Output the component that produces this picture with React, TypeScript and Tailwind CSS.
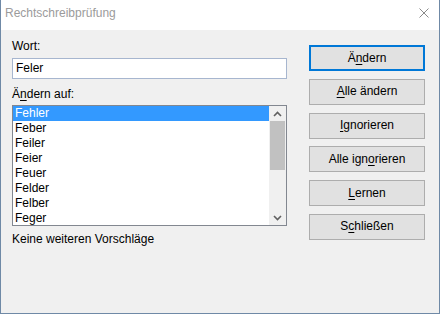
import React from "react";

const font = "font-['Segoe_UI','Liberation_Sans',Arial,sans-serif]";

function U({ children }: { children: React.ReactNode }) {
  return <span className="underline underline-offset-[2px] decoration-[1px]">{children}</span>;
}

function Btn({ children, focused }: { children: React.ReactNode; focused?: boolean }) {
  return (
    <div
      className={
        "h-[26px] w-[116px] flex items-center justify-center bg-[#e1e1e1] text-[12px] leading-[15px] text-black " +
        (focused ? "border-2 border-[#0078d7]" : "border border-[#adadad]")
      }
    >
      {children}
    </div>
  );
}

const items = ["Fehler", "Feber", "Feiler", "Feier", "Feuer", "Felder", "Felber", "Feger"];

export default function App() {
  return (
    <div className={"w-[440px] h-[314px] flex flex-col bg-[#f0f0f0] border-x border-b border-[#6f89a6] " + font}>
      <div className="h-[30px] bg-white flex items-start justify-between pl-[4px] pr-[10px] pt-[6px]">
        <span className="text-[12px] leading-[15px] text-[#9b9b9b]">Rechtschreibprüfung</span>
        <svg width="10" height="10" viewBox="0 0 10 10" className="mt-[2px]">
          <path d="M0.5 0.5 L9.5 9.5 M9.5 0.5 L0.5 9.5" stroke="#8a8a8a" strokeWidth="1" fill="none" />
        </svg>
      </div>
      <div className="flex pl-[11px] pr-[14px] justify-between">
        <div className="w-[275px] flex flex-col pt-[9px] text-[12px] leading-[15px] text-black">
          <div className="h-[15px]">Wort:</div>
          <div className="mt-[4px] h-[21px] bg-white border border-[#a7b6cf] flex items-center pl-[3px]">Feler</div>
          <div className="mt-[8px] h-[15px]">
            Ä<U>n</U>dern auf:
          </div>
          <div className="mt-[3px] h-[121px] border border-[#828790] bg-white flex overflow-hidden">
            <div className="flex-1 flex flex-col">
              {items.map((it, i) => (
                <div
                  key={it}
                  className={
                    "h-[15px] shrink-0 leading-[15px] pl-[2px] " + (i === 0 ? "bg-[#3399ff] text-white" : "text-black")
                  }
                >
                  {it}
                </div>
              ))}
            </div>
            <div className="w-[17px] bg-[#f0f0f0] flex flex-col">
              <div className="h-[15px] flex items-center justify-center">
                <svg width="9" height="6" viewBox="0 0 9 6">
                  <path d="M1 5 L4.5 1.5 L8 5" stroke="#606060" strokeWidth="1.6" fill="none" />
                </svg>
              </div>
              <div className="h-[49px] mx-[1px] bg-[#c1c1c1]" />
              <div className="flex-1" />
              <div className="h-[15px] flex items-center justify-center">
                <svg width="9" height="6" viewBox="0 0 9 6">
                  <path d="M1 1 L4.5 4.5 L8 1" stroke="#606060" strokeWidth="1.6" fill="none" />
                </svg>
              </div>
            </div>
          </div>
          <div className="mt-[6px] h-[15px]">Keine weiteren Vorschläge</div>
        </div>
        <div className="flex flex-col gap-[7.8px] pt-[15px]">
          <Btn focused>
            Ä<U>n</U>dern
          </Btn>
          <Btn>
            <U>A</U>lle ändern
          </Btn>
          <Btn>
            <U>I</U>gnorieren
          </Btn>
          <Btn>
            Alle ign<U>o</U>rieren
          </Btn>
          <Btn>
            <U>L</U>ernen
          </Btn>
          <Btn>
            S<U>c</U>hließen
          </Btn>
        </div>
      </div>
    </div>
  );
}
